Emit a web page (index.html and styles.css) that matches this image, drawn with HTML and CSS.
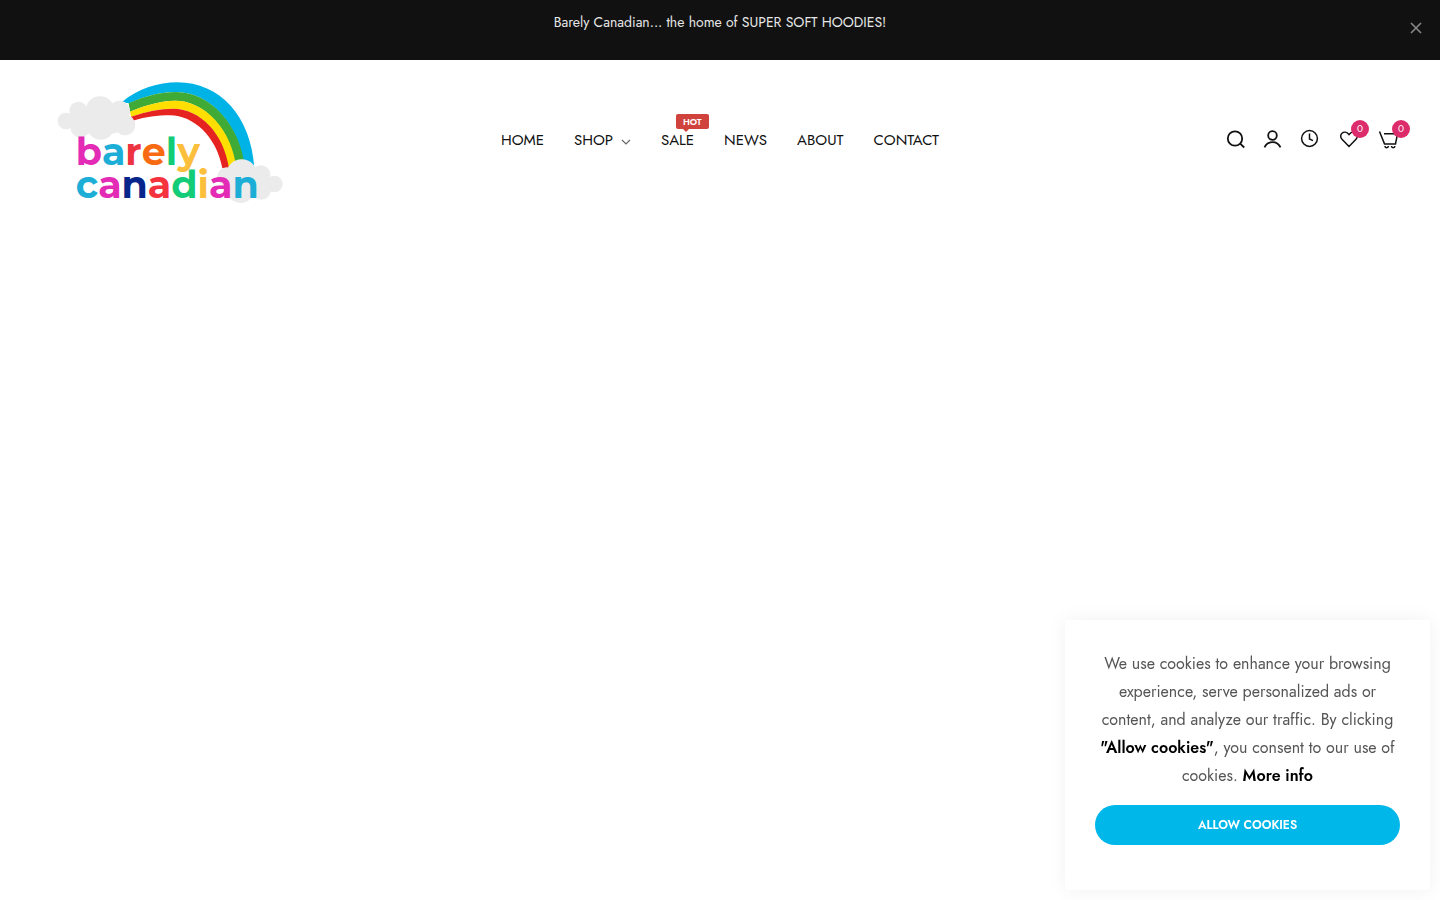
FILE: index.html
```html
<!DOCTYPE html>
<html lang="en">
<head>
    <meta charset="UTF-8">
    <meta name="viewport" content="width=device-width, initial-scale=1.0">
    <title>Barely Canadian</title>
    <link rel="stylesheet" href="styles.css">
</head>
<body>
    <div class="announcement">
        <p>Barely Canadian... the home of SUPER SOFT HOODIES!</p>
        <button type="button" class="announcement-close" aria-label="Close">
            <svg width="12" height="12" viewBox="0 0 12 12"><path d="M1 1l10 10M11 1L1 11"/></svg>
        </button>
    </div>

    <header class="header">
        <a class="logo" href="#" aria-label="Barely Canadian">
            <svg width="240" height="140" viewBox="0 0 720 420">
                <!-- rainbow -->
                <path fill="#00b3e6" d="M215 97C265 55 325 37 382 37C510 37 604 140 613 295L583 295C570 165 480 66 378 66C335 66 285 77 238 100Z"/>
                <path fill="#3faa35" d="M236 100C285 77 335 66 378 66C480 66 572 165 585 295L557 295C545 180 465 92 375 92C335 92 290 104 240 125Z"/>
                <path fill="#ffde00" d="M240 125C290 104 335 92 375 92C465 92 547 180 559 295L535 295C520 190 450 116 370 116C330 116 290 124 243 140Z"/>
                <path fill="#e52320" d="M243 140C290 124 330 116 370 116C450 116 522 190 537 295L517 295C500 200 430 136 360 136C320 136 290 140 249 152Z"/>
                <!-- clouds -->
                <g fill="#ebebeb">
                    <path d="M60 130L120 110L210 110L230 180L150 200L70 180Z"/>
                    <circle cx="48" cy="153" r="25"/>
                    <circle cx="85" cy="122" r="27"/>
                    <circle cx="150" cy="122" r="43"/>
                    <circle cx="208" cy="124" r="32"/>
                    <circle cx="225" cy="165" r="31"/>
                    <circle cx="152" cy="168" r="41"/>
                    <circle cx="91" cy="172" r="30"/>
                    <path d="M560 300L640 310L670 345L630 370L560 370Z"/>
                    <circle cx="575" cy="315" r="47"/>
                    <circle cx="530" cy="320" r="28"/>
                    <circle cx="633" cy="314" r="28"/>
                    <circle cx="673" cy="342" r="25"/>
                    <circle cx="635" cy="362" r="27"/>
                    <circle cx="572" cy="358" r="41"/>
                </g>
                <text class="logo-text" x="77" y="286"><tspan fill="#e32bb5">b</tspan><tspan fill="#1caed6">a</tspan><tspan fill="#ee3340">r</tspan><tspan fill="#f96b13">e</tspan><tspan fill="#13cc78">l</tspan><tspan fill="#fbbf3c">y</tspan></text>
                <text class="logo-text" x="77" y="384"><tspan fill="#1caed6">c</tspan><tspan fill="#e32bb5">a</tspan><tspan fill="#07268c">n</tspan><tspan fill="#f4333f">a</tspan><tspan fill="#13cc78">d</tspan><tspan fill="#fbbf3c">i</tspan><tspan fill="#e32bb5">a</tspan><tspan fill="#1caed6">n</tspan></text>
            </svg>
        </a>

        <nav class="nav">
            <a href="#">HOME</a>
            <a href="#">SHOP
                <svg class="chevron" width="10" height="6" viewBox="0 0 10 6"><path d="M1 1l4 4 4-4"/></svg>
            </a>
            <a href="#">SALE<span class="hot">HOT</span></a>
            <a href="#">NEWS</a>
            <a href="#">ABOUT</a>
            <a href="#">CONTACT</a>
        </nav>

        <div class="actions">
            <a href="#" aria-label="Search">
                <svg width="20" height="20" viewBox="0 0 20 20"><circle cx="9" cy="8.500" r="7.200"/><path d="M14.200 13.700l4 3.800"/></svg>
            </a>
            <a href="#" aria-label="Account">
                <svg width="20" height="20" viewBox="0 0 20 20"><circle cx="8.500" cy="5.500" r="4.300"/><path d="M.500 17.300c1.800-3.800 4.600-5.200 8-5.200s6.200 1.400 8 5.200"/></svg>
            </a>
            <a href="#" aria-label="Recently viewed">
                <svg class="thin" width="20" height="20" viewBox="0 0 20 20"><circle cx="7.500" cy="8.500" r="7.900"/><path d="M7.500 3.500v5.500l3.500 1.600"/></svg>
            </a>
            <a href="#" aria-label="Wishlist">
                <svg class="thin" width="20" height="20" viewBox="0 0 20 20"><path d="M9 16.500L2 9.300C.200 7.400.300 4.700 2 3.200s4.500-1.300 6.200.500l.800.900.800-.900c1.700-1.800 4.500-2 6.200-.500s1.800 4.200 0 6.100Z"/></svg>
                <span class="count count-wishlist">0</span>
            </a>
            <a href="#" aria-label="Cart">
                <svg class="thin" width="20" height="20" viewBox="0 0 20 20"><path d="M1.500 1.500l5 12.400h11L19.500 3.800H6"/><path d="M7 16a1.700 1.700 0 0 0 3.400 0M13.500 16a1.700 1.700 0 0 0 3.400 0"/></svg>
                <span class="count">0</span>
            </a>
        </div>
    </header>

    <div class="cookies">
        <p>We use cookies to enhance your browsing experience, serve personalized ads or content, and analyze our traffic. By clicking <strong>"Allow cookies"</strong>, you consent to our use of cookies. <a href="#">More info</a></p>
        <button type="button">ALLOW COOKIES</button>
    </div>
</body>
</html>
```
FILE: styles.css
```css
* {
    box-sizing: border-box;
}
body {
    margin: 0;
    background-color: #fff;
    color: #111;
    font-family: Jost, Lato, sans-serif;
    font-size: 14px;
}
a {
    color: inherit;
    text-decoration: none;
}
svg {
    display: block;
}

/* Announcement bar */
.announcement {
    position: relative;
    min-height: 60px;
    padding: 12px 50px;
    background-color: #111;
    color: #e6e6e6;
    text-align: center;
}
.announcement p {
    margin: 0;
    line-height: 20px;
}
.announcement-close {
    position: absolute;
    top: 16px;
    right: 12px;
    padding: 6px;
    border: none;
    background: none;
    cursor: pointer;
}
.announcement-close svg {
    stroke: #888;
    stroke-width: 1.6;
}

/* Header */
.header {
    display: grid;
    grid-template-columns: 1fr auto 1fr;
    align-items: center;
    padding: 10px 30px;
}
.logo {
    justify-self: start;
    padding-left: 20px;
}
.logo-text {
    font-family: Montserrat, Inter, sans-serif;
    font-size: 114px;
    font-weight: 700;
}
.nav {
    display: flex;
    gap: 30px;
    font-size: 15px;
    line-height: 20px;
}
.nav a {
    position: relative;
    display: flex;
    align-items: center;
    gap: 8px;
}
.chevron {
    margin-top: 4px;
    fill: none;
    stroke: #666;
    stroke-width: 1.2;
}
.hot {
    position: absolute;
    top: -16px;
    left: 15px;
    padding: 0 7px;
    border-radius: 2px;
    background-color: #d0433c;
    color: #fff;
    font-size: 9px;
    font-weight: 600;
    line-height: 15px;
}
.hot::after {
    content: "";
    position: absolute;
    top: 100%;
    left: 7px;
    border: 3px solid transparent;
    border-top-color: #d0433c;
    border-bottom: none;
}
.actions {
    display: flex;
    justify-content: flex-end;
    gap: 18px;
    padding-right: 12px;
}
.actions a {
    position: relative;
}
.actions svg {
    fill: none;
    stroke: #111;
    stroke-width: 1.8;
    overflow: visible;
}
.actions .thin {
    stroke-width: 1.5;
}
.count {
    position: absolute;
    top: -10px;
    right: -12px;
    width: 18px;
    border-radius: 50%;
    background-color: #dc2c6b;
    color: #fff;
    font-size: 10px;
    line-height: 18px;
    text-align: center;
}
.count-wishlist {
    right: -9px;
}

/* Cookie notice */
.cookies {
    position: fixed;
    right: 10px;
    bottom: 10px;
    width: 365px;
    max-width: calc(100% - 20px);
    padding: 30px 30px 45px;
    border-radius: 3px;
    background-color: #fff;
    box-shadow: 0 0 20px rgba(0, 0, 0, 0.06);
    text-align: center;
}
.cookies p {
    margin: 0 0 15px;
    color: #555;
    font-size: 16px;
    line-height: 28px;
}
.cookies strong,
.cookies a {
    color: #000;
    font-weight: 600;
}
.cookies button {
    width: 100%;
    height: 40px;
    border: none;
    border-radius: 20px;
    background-color: #00b7ea;
    color: #fff;
    font-family: inherit;
    font-size: 12px;
    font-weight: 600;
    cursor: pointer;
}
```
